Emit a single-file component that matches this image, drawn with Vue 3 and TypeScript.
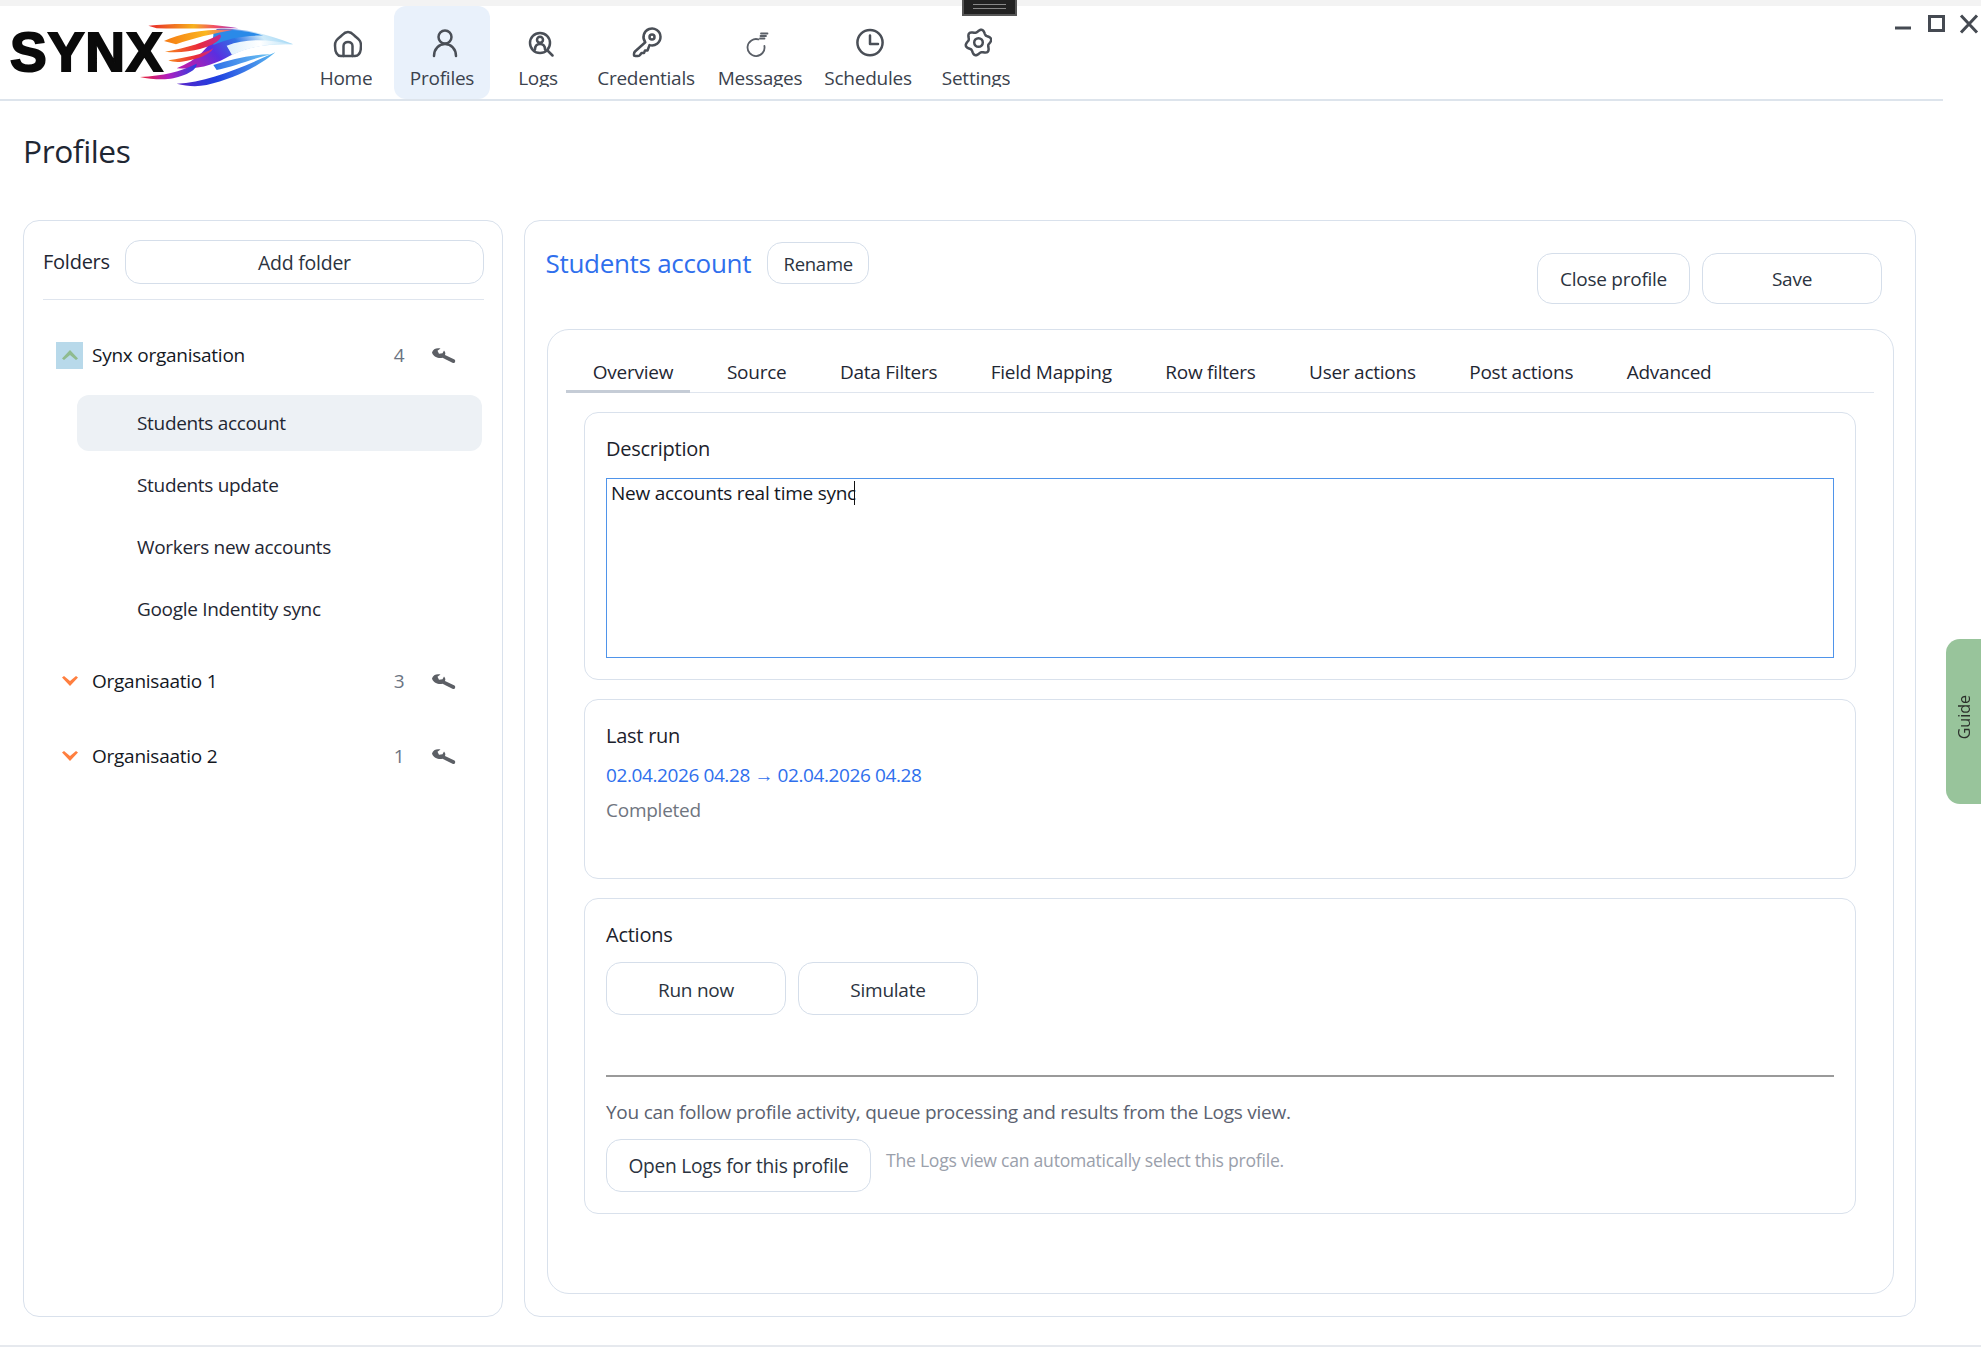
<script setup lang="ts">
interface NavItem {
  label: string;
  strokes: string[];
  thin?: boolean;
}

// scalloped outline for the settings icon
function gearOutline(cx: number, cy: number): string {
  const pts: string[] = [];
  for (let i = 0; i < 72; i++) {
    const a = (i / 72) * Math.PI * 2;
    const r = 11.6 + 1.5 * Math.cos(a * 6 + Math.PI / 2);
    pts.push(`${(cx + r * Math.cos(a)).toFixed(2)} ${(cy + r * Math.sin(a)).toFixed(2)}`);
  }
  return `M${pts.join('L')}Z`;
}

const navItems: NavItem[] = [
  {
    label: 'Home',
    strokes: [
      'M18 6C14 6 13 8.5 10 11C7 13.5 5 15 5 19.5C5 25 6.5 30 11 30H25C29.5 30 31 25 31 19.5C31 15 29 13.5 26 11C23 8.5 22 6 18 6Z',
      'M13.5 30V20C13.5 17.5 15.5 16 18 16C20.5 16 22.5 17.5 22.5 20V30',
    ],
  },
  {
    label: 'Profiles',
    strokes: [
      'M19 4.5A6.5 6.5 0 1 0 19 17.5A6.5 6.5 0 1 0 19 4.5Z',
      'M8 30C8 23 13 18 19 18C25 18 30 23 30 30',
    ],
  },
  {
    label: 'Logs',
    strokes: [
      'M18 7A10 10 0 1 0 18 27A10 10 0 1 0 18 7Z',
      'M25.5 24.5L30.5 29.5',
      'M18 10.7A3 3 0 1 0 18 16.7A3 3 0 1 0 18 10.7Z',
      'M13 23.5C13 19.5 15.5 18 18 18C20.5 18 23 19.5 23 23.5',
    ],
  },
  {
    label: 'Credentials',
    strokes: [
      'M19.5 19.1L17.5 24.5H15L14 27H11.5L10 29Q9.5 30 8 30H5.5Q4 30 4 29V28Q4 26.5 5 25.5L15.3 16.2A8.5 8.5 0 1 1 19.5 19.1Z',
      'M22 8.5A2.5 2.5 0 1 0 22 13.5A2.5 2.5 0 1 0 22 8.5Z',
    ],
  },
  {
    label: 'Messages',
    thin: true,
    strokes: [
      'M20.4 20A8.5 8.5 0 1 1 14.5 13.4',
      'M17 7.5H23.5',
      'M16.5 10H22',
      'M16 12.5H20.5',
    ],
  },
  {
    label: 'Schedules',
    strokes: ['M18 4A12.6 12.6 0 1 0 18 29.2A12.6 12.6 0 1 0 18 4Z', 'M18 9.5V18H26'],
  },
  {
    label: 'Settings',
    strokes: [gearOutline(18.5, 16.5), 'M18.5 12.2A4.3 4.3 0 1 0 18.5 20.8A4.3 4.3 0 1 0 18.5 12.2Z'],
  },
];

const folders = [
  {
    name: 'Synx organisation',
    count: 4,
    open: true,
    items: ['Students account', 'Students update', 'Workers new accounts', 'Google Indentity sync'],
  },
  { name: 'Organisaatio 1', count: 3, open: false, items: [] },
  { name: 'Organisaatio 2', count: 1, open: false, items: [] },
];

const tabs = [
  'Overview',
  'Source',
  'Data Filters',
  'Field Mapping',
  'Row filters',
  'User actions',
  'Post actions',
  'Advanced',
];
</script>

<template>
  <div class="app">
    <div class="strip"></div>
    <div class="grabber"><span></span></div>

    <header class="topbar">
      <div class="logo">
        <span class="logo-text">SYNX</span>
        <svg class="logo-wing" viewBox="0 0 900 240" width="300" height="80">
          <defs>
            <linearGradient id="gTop" x1="0" x2="1" y1="0" y2="0">
              <stop offset="0" stop-color="#e8232a" />
              <stop offset="0.5" stop-color="#f7b21c" />
              <stop offset="0.75" stop-color="#f04a6a" />
              <stop offset="1" stop-color="#a04ad0" />
            </linearGradient>
            <linearGradient id="gOrange" x1="0" x2="1" y1="0" y2="0">
              <stop offset="0" stop-color="#f57a14" />
              <stop offset="0.6" stop-color="#fbb61e" />
              <stop offset="1" stop-color="#e0569a" />
            </linearGradient>
            <linearGradient id="gRed" x1="0" x2="1" y1="0" y2="0">
              <stop offset="0" stop-color="#f7891c" />
              <stop offset="0.6" stop-color="#ea2a3a" />
              <stop offset="1" stop-color="#c42a90" />
            </linearGradient>
            <linearGradient id="gBody" x1="0" x2="1" y1="0.6" y2="0.3">
              <stop offset="0" stop-color="#b41fb0" />
              <stop offset="0.3" stop-color="#5a2ee0" />
              <stop offset="0.55" stop-color="#2f74e4" />
              <stop offset="0.78" stop-color="#cfeaf9" />
              <stop offset="1" stop-color="#9fd6f4" />
            </linearGradient>
            <linearGradient id="gPale" x1="0" x2="1" y1="0" y2="0">
              <stop offset="0" stop-color="#dceffc" />
              <stop offset="0.5" stop-color="#ffffff" />
              <stop offset="1" stop-color="#b6e0f7" />
            </linearGradient>
            <linearGradient id="gLow" x1="0" x2="1" y1="0" y2="0">
              <stop offset="0" stop-color="#ea1f2e" />
              <stop offset="0.5" stop-color="#b01ec0" />
              <stop offset="1" stop-color="#2a3fe0" />
            </linearGradient>
            <linearGradient id="gBlue" x1="0" x2="1" y1="0" y2="0">
              <stop offset="0" stop-color="#5a22c8" />
              <stop offset="0.4" stop-color="#1f3fe0" />
              <stop offset="1" stop-color="#58b8f0" />
            </linearGradient>
            <linearGradient id="gSky" x1="0" x2="1" y1="0" y2="0">
              <stop offset="0" stop-color="#2f6fe8" />
              <stop offset="1" stop-color="#6cc4f2" />
            </linearGradient>
          </defs>
          <path d="M445 32C520 24 640 24 715 40C640 38 560 42 470 40Z" fill="url(#gTop)" />
          <path d="M650 42C720 38 790 52 880 88C820 86 750 90 690 122C650 145 600 165 530 160C590 135 630 100 650 42Z" fill="url(#gBody)" />
          <path d="M640 46C700 42 750 48 790 62C730 60 680 72 640 90Z" fill="#2a8ae8" />
          <path d="M680 92C740 68 810 74 880 88C820 84 760 92 696 120Z" fill="url(#gPale)" />
          <path d="M492 78C540 56 610 42 700 44C640 56 580 68 528 88Z" fill="url(#gOrange)" />
          <path d="M495 110C560 100 620 80 660 58C672 72 640 92 600 102C570 110 530 114 495 110Z" fill="url(#gRed)" />
          <path d="M505 136C560 128 610 118 640 100C630 120 590 134 545 140C530 142 515 140 505 136Z" fill="url(#gRed)" />
          <path d="M420 186C490 182 540 170 590 146C592 164 560 180 520 190C490 196 450 192 420 186Z" fill="url(#gLow)" />
          <path d="M530 206C620 202 720 160 826 112C780 152 700 192 620 210C590 216 560 214 530 206Z" fill="url(#gBlue)" />
          <path d="M640 150C700 130 760 118 812 118C760 130 700 155 650 165Z" fill="url(#gSky)" />
        </svg>
      </div>

      <nav class="nav">
        <div
          v-for="item in navItems"
          :key="item.label"
          class="nav-item"
          :class="{ active: item.label === 'Profiles' }"
        >
          <svg class="nav-icon" :class="{ thin: item.thin }" viewBox="0 0 32 32" width="32" height="32">
            <path v-for="d in item.strokes" :key="d" :d="d" />
          </svg>
          <span class="nav-label">{{ item.label }}</span>
        </div>
      </nav>

      <div class="window-btns">
        <svg viewBox="0 0 90 22" width="90" height="22">
          <path d="M1 14H17" />
          <path d="M35.5 2.5H49.5V16.5H35.5Z" />
          <path d="M67 1.5L83 18.5M83 1.5L67 18.5" />
        </svg>
      </div>
    </header>

    <main class="page">
      <h1 class="page-title">Profiles</h1>

      <div class="panels">
        <aside class="panel folders">
          <div class="folders-head">
            <span class="folders-title">Folders</span>
            <button class="btn add-folder">Add folder</button>
          </div>

          <div v-for="folder in folders" :key="folder.name" class="folder">
            <div class="folder-row">
              <span class="toggle" :class="{ open: folder.open }">
                <svg viewBox="0 0 16 10" width="16" height="10">
                  <path v-if="folder.open" d="M0 8.5L8 0L16 8.5L14 10L8 5L2 10Z" />
                  <path v-else d="M0 1.5L2 0L8 5L14 0L16 1.5L8 10Z" />
                </svg>
              </span>
              <span class="folder-name">{{ folder.name }}</span>
              <span class="folder-count">{{ folder.count }}</span>
              <svg class="wrench" viewBox="0 0 25 17" width="25" height="17">
                <path d="M1 5.5C2 2 5.5 0.5 9.5 1.5L6.5 3.7L8 6.7L11.5 6.2L13 3.5C14.5 5 14.6 6.5 14 8L23.5 12.5C25 13.5 24 16.5 22 16L11.5 10.7C8 11.5 2.5 10.5 1 5.5Z" />
              </svg>
            </div>
            <div v-if="folder.items.length" class="folder-items">
              <div
                v-for="item in folder.items"
                :key="item"
                class="folder-item"
                :class="{ selected: item === 'Students account' }"
              >
                {{ item }}
              </div>
            </div>
          </div>
        </aside>

        <section class="panel editor">
          <div class="editor-head">
            <div class="editor-name">
              <h2>Students account</h2>
              <button class="btn rename">Rename</button>
            </div>
            <div class="editor-actions">
              <button class="btn close">Close profile</button>
              <button class="btn save">Save</button>
            </div>
          </div>

          <div class="tab-card">
            <div class="tabs">
              <span
                v-for="tab in tabs"
                :key="tab"
                class="tab"
                :class="{ active: tab === 'Overview' }"
                >{{ tab }}</span
              >
            </div>

            <div class="card desc-card">
              <div class="card-label">Description</div>
              <div class="textbox">New accounts real time sync<span class="caret"></span></div>
            </div>

            <div class="card run-card">
              <div class="card-label">Last run</div>
              <div class="run-date">02.04.2026 04.28 → 02.04.2026 04.28</div>
              <div class="run-state">Completed</div>
            </div>

            <div class="card actions-card">
              <div class="card-label">Actions</div>
              <div class="action-btns">
                <button class="btn big">Run now</button>
                <button class="btn big">Simulate</button>
              </div>
              <div class="rule"></div>
              <div class="logs-hint">You can follow profile activity, queue processing and results from the Logs view.</div>
              <div class="logs-row">
                <button class="btn open-logs">Open Logs for this profile</button>
                <span class="logs-note">The Logs view can automatically select this profile.</span>
              </div>
            </div>
          </div>
        </section>
      </div>
    </main>

    <div class="page-line"></div>
    <div class="guide"><span>Guide</span></div>
  </div>
</template>

<style>
html,
body {
  margin: 0;
  background: #fff;
}
</style>

<style scoped>
.app {
  position: relative;
  width: 1981px;
  height: 1348px;
  overflow: hidden;
  background: #fff;
  color: #1f2733;
  font-family: "Open Sans", "Noto Sans", sans-serif;
  font-size: 19px;
  letter-spacing: -0.25px;
}

.strip {
  height: 6px;
  background: #f3f3f3;
}

.grabber {
  position: absolute;
  top: 0;
  left: 962px;
  width: 55px;
  height: 16px;
  box-sizing: border-box;
  background: #222;
  border: 2px solid #555;
  border-top: 0;
  padding: 4px 9px 0;
}

.grabber span {
  display: block;
  height: 3px;
  border-top: 1px solid #888;
  border-bottom: 1px solid #888;
}

.topbar {
  position: relative;
  display: flex;
  height: 93px;
  margin-right: 38px;
  border-bottom: 2px solid #dde4ec;
}

.logo {
  position: relative;
  width: 298px;
  flex: none;
}

.logo-text {
  position: absolute;
  left: 10px;
  top: 15px;
  font-family: "Liberation Sans", sans-serif;
  font-size: 55px;
  font-weight: 700;
  line-height: 62px;
  letter-spacing: 1px;
  color: #0a0a0a;
  -webkit-text-stroke: 2px #0a0a0a;
}

.logo-wing {
  position: absolute;
  left: 0;
  top: 9px;
}

.nav {
  display: grid;
  grid-template-columns: 96px 96px 96px 120px 108px 108px 108px;
}

.nav-item {
  display: flex;
  flex-direction: column;
  align-items: center;
  padding-top: 20px;
  height: 73px;
  overflow: hidden;
  border-radius: 12px;
  color: #3b424d;
}

.nav-item.active {
  background: #e9f1fb;
}

.nav-icon {
  fill: none;
  stroke: #4a4f57;
  stroke-width: 2.5;
  stroke-linecap: round;
  stroke-linejoin: round;
  flex: none;
}

.nav-icon.thin {
  stroke: #5a5f67;
  stroke-width: 1.8;
}

.nav-label {
  margin-top: 7px;
  line-height: 27px;
  height: 22px;
  overflow: hidden;
  white-space: nowrap;
}

.window-btns {
  position: absolute;
  top: 8px;
  left: 1894px;
  width: 90px;
}

.window-btns path {
  fill: none;
  stroke: #454a52;
  stroke-width: 3;
}

.page {
  padding-left: 23px;
}

.page-title {
  margin: 29px 0 48px;
  font-size: 31.7px;
  line-height: 42px;
  font-weight: 400;
  letter-spacing: -0.4px;
}

.panels {
  display: flex;
  gap: 21px;
  height: 1097px;
}

.panel {
  box-sizing: border-box;
  border: 1.5px solid #d9e1ec;
  border-radius: 16px;
}

.btn {
  box-sizing: border-box;
  padding: 0;
  border: 1.5px solid #d5deea;
  border-radius: 15px;
  background: #fff;
  color: #2b3340;
  font: inherit;
  letter-spacing: inherit;
}

.folders {
  width: 480px;
  padding: 19px 18px 0 19px;
}

.folders-head {
  display: flex;
  align-items: center;
  gap: 15px;
  height: 44px;
  padding-bottom: 15px;
  margin-bottom: 33px;
  border-bottom: 1.5px solid #dfe5ee;
}

.folders-title {
  flex: none;
  font-size: 20px;
  line-height: 48px;
}

.add-folder {
  flex: 1;
  height: 44px;
  font-size: 19.5px;
  line-height: 44px;
}

.folder {
  padding-bottom: 22px;
}

.folder-row {
  display: flex;
  align-items: center;
  height: 44px;
  margin-bottom: 9px;
  padding-left: 13px;
}

.toggle {
  display: flex;
  align-items: center;
  justify-content: center;
  width: 27px;
  height: 27px;
  margin-right: 9px;
  flex: none;
}

.toggle.open {
  background: #b8d9ea;
}

.toggle path {
  fill: #ff7f3f;
}

.toggle.open path {
  fill: #8fbb8f;
}

.folder-name {
  flex: 1;
  color: #14181f;
}

.folder-count {
  width: 12px;
  margin-right: 26px;
  color: #6b7482;
  text-align: center;
}

.wrench {
  margin-right: 28px;
  flex: none;
  filter: blur(0.4px);
}

.wrench path {
  fill: #5c5f65;
}

.folder-items {
  display: flex;
  flex-direction: column;
  gap: 6px;
  margin: 0 0 0 34px;
  padding-top: 9px;
  width: 405px;
}

.folder-item {
  display: flex;
  align-items: center;
  height: 56px;
  padding-left: 60px;
  border-radius: 12px;
  letter-spacing: -0.32px;
}

.folder-item.selected {
  background: #edf1f5;
}

.editor {
  width: 1392px;
  padding: 0 21px 0 22px;
}

.editor-head {
  display: flex;
  justify-content: space-between;
  align-items: flex-start;
  height: 108px;
  margin-left: -1.5px;
  padding-right: 12px;
}

.editor-name {
  display: flex;
  align-items: center;
  gap: 16px;
  margin-top: 21px;
}

.editor-name h2 {
  margin: 0;
  color: #2f6fed;
  font-size: 26px;
  font-weight: 400;
  letter-spacing: -0.3px;
}

.rename {
  width: 102px;
  height: 42px;
  font-size: 18.5px;
  line-height: 42px;
}

.editor-actions {
  display: flex;
  gap: 12px;
  margin-top: 32px;
}

.close {
  width: 153px;
  height: 51px;
}

.save {
  width: 180px;
  height: 51px;
}

.tab-card {
  box-sizing: border-box;
  height: 965px;
  padding: 21px 37px 0 36px;
  border: 1.5px solid #d9e1ec;
  border-radius: 22px;
}

.tabs {
  display: flex;
  height: 42px;
  margin: 0 -18px 19px;
  box-sizing: border-box;
  border-bottom: 1.5px solid #dfe5ee;
}

.tab {
  padding: 0 26.75px;
  line-height: 42px;
  height: 42px;
  white-space: nowrap;
  box-sizing: border-box;
}

.tab.active {
  padding-right: 17px;
  margin-right: 10px;
  border-bottom: 3px solid #c5ccd6;
}

.card {
  box-sizing: border-box;
  margin-bottom: 19px;
  padding: 22px 21px;
  border: 1.5px solid #d9e1ec;
  border-radius: 14px;
}

.card-label {
  font-size: 20px;
  line-height: 28px;
  color: #1c222c;
}

.desc-card {
  height: 268px;
}

.textbox {
  box-sizing: border-box;
  height: 180px;
  margin-top: 15px;
  padding: 1.5px 4px 0;
  line-height: 24px;
  border: 1.5px solid #4f94ea;
  color: #14181f;
}

.caret {
  display: inline-block;
  width: 1.5px;
  height: 24px;
  margin-left: -2px;
  background: #111;
  vertical-align: top;
}

.run-card {
  height: 180px;
}

.run-date {
  margin-top: 11px;
  line-height: 28px;
  color: #2f6fed;
  letter-spacing: -0.4px;
}

.run-state {
  margin-top: 7px;
  line-height: 28px;
  color: #6f7580;
}

.actions-card {
  height: 316px;
}

.action-btns {
  display: flex;
  gap: 12px;
  margin-top: 13px;
}

.big {
  width: 180px;
  height: 53px;
  line-height: 54px;
}

.rule {
  height: 2px;
  margin-top: 60px;
  background: #9a9a9a;
}

.logs-hint {
  margin-top: 21px;
  line-height: 28px;
  color: #5b6270;
}

.logs-row {
  display: flex;
  gap: 15px;
  margin-top: 13px;
}

.open-logs {
  width: 265px;
  height: 53px;
  flex: none;
  font-size: 19.2px;
}

.logs-note {
  margin-top: 7px;
  line-height: 28px;
  font-size: 17.6px;
  color: #9aa0ab;
}

.page-line {
  height: 2px;
  margin-top: 28px;
  background: #e6e9ee;
}

.guide {
  position: absolute;
  top: 639px;
  left: 1946px;
  width: 35px;
  height: 165px;
  padding-bottom: 8px;
  box-sizing: border-box;
  display: flex;
  align-items: center;
  justify-content: center;
  border-radius: 14px 0 0 14px;
  background: #98c49b;
}

.guide span {
  writing-mode: vertical-rl;
  transform: rotate(180deg);
  font-size: 16px;
  line-height: 20px;
  color: #2a2f2a;
  letter-spacing: 0;
}
</style>
